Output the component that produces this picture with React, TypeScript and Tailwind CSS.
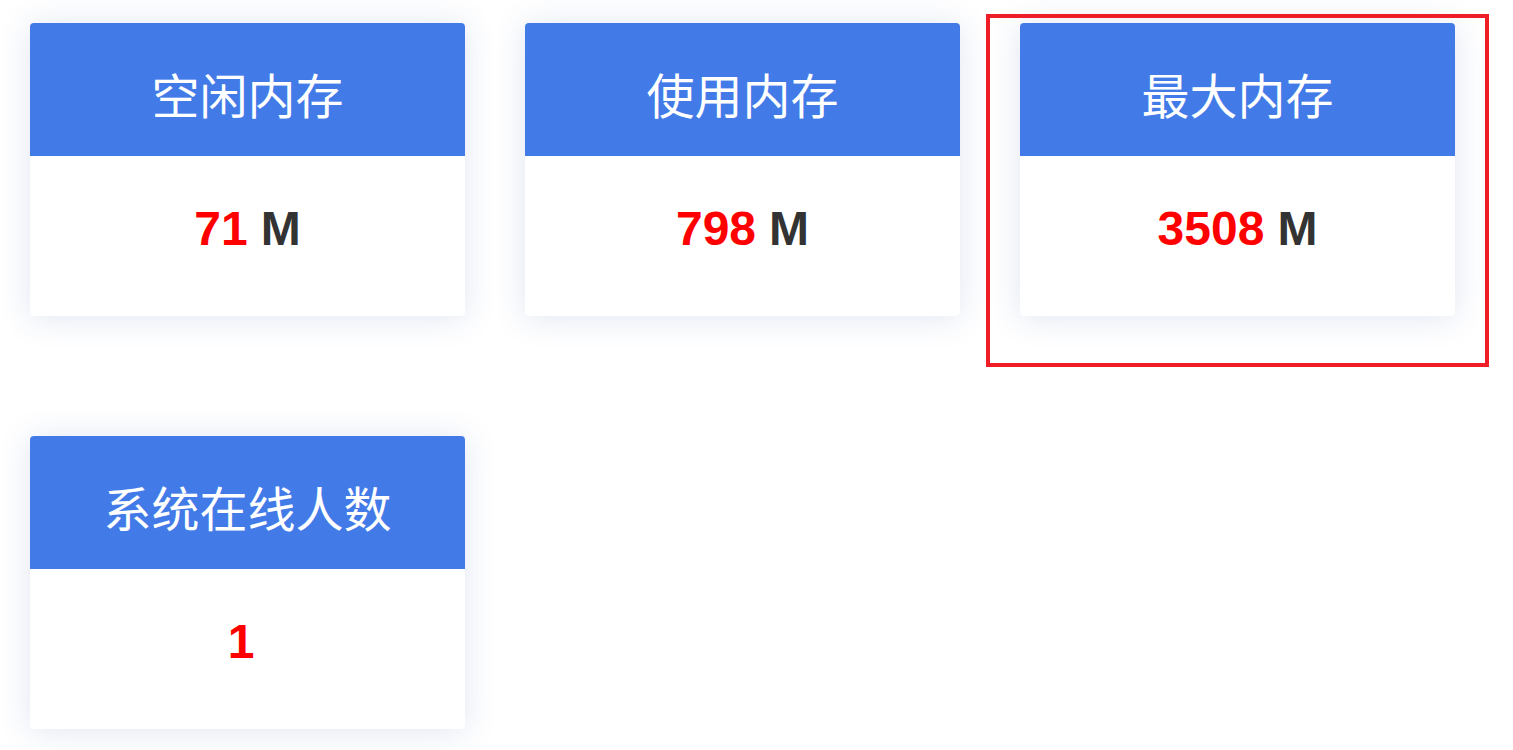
import React from "react";

type Stat = {
  title: string;
  value: string;
  unit?: string;
  highlight?: boolean;
};

const stats: Stat[] = [
  { title: "空闲内存", value: "71", unit: "M" },
  { title: "使用内存", value: "798", unit: "M" },
  { title: "最大内存", value: "3508", unit: "M", highlight: true },
  { title: "系统在线人数", value: "1" },
];

function StatCard({ title, value, unit }: Stat) {
  return (
    <div className="flex h-[293px] w-[435px] flex-col overflow-hidden rounded-[4px] bg-white shadow-[0_2px_32px_rgba(50,80,170,0.15)]">
      <div className="flex h-[133px] items-center justify-center bg-[#427be8] pt-[17px] text-[48px] leading-none text-white font-['Liberation_Sans','Noto_Sans_CJK_SC',sans-serif]">
        {title}
      </div>
      <div className="flex flex-1 justify-center pt-[49px] font-['Liberation_Sans',sans-serif] text-[48px] font-bold leading-none">
        <span className="text-[#ff0000]">{value}</span>
        {/* trailing space stays even without a unit */}
        <span className="ml-[13px] text-[#333333]">{unit ?? ""}</span>
      </div>
    </div>
  );
}

export default function App() {
  return (
    <div className="min-h-[750px] w-full bg-white pt-[18px]">
      <div className="grid grid-cols-[495px_495px_495px] gap-y-[68px]">
        {stats.map((s) => (
          <div
            key={s.title}
            className={
              s.highlight
                ? "px-[30px] pt-[5px] pb-[47px] outline-4 outline-solid outline-[#ee1d26]"
                : "px-[30px] pt-[5px] pb-[47px]"
            }
          >
            <StatCard {...s} />
          </div>
        ))}
      </div>
    </div>
  );
}
